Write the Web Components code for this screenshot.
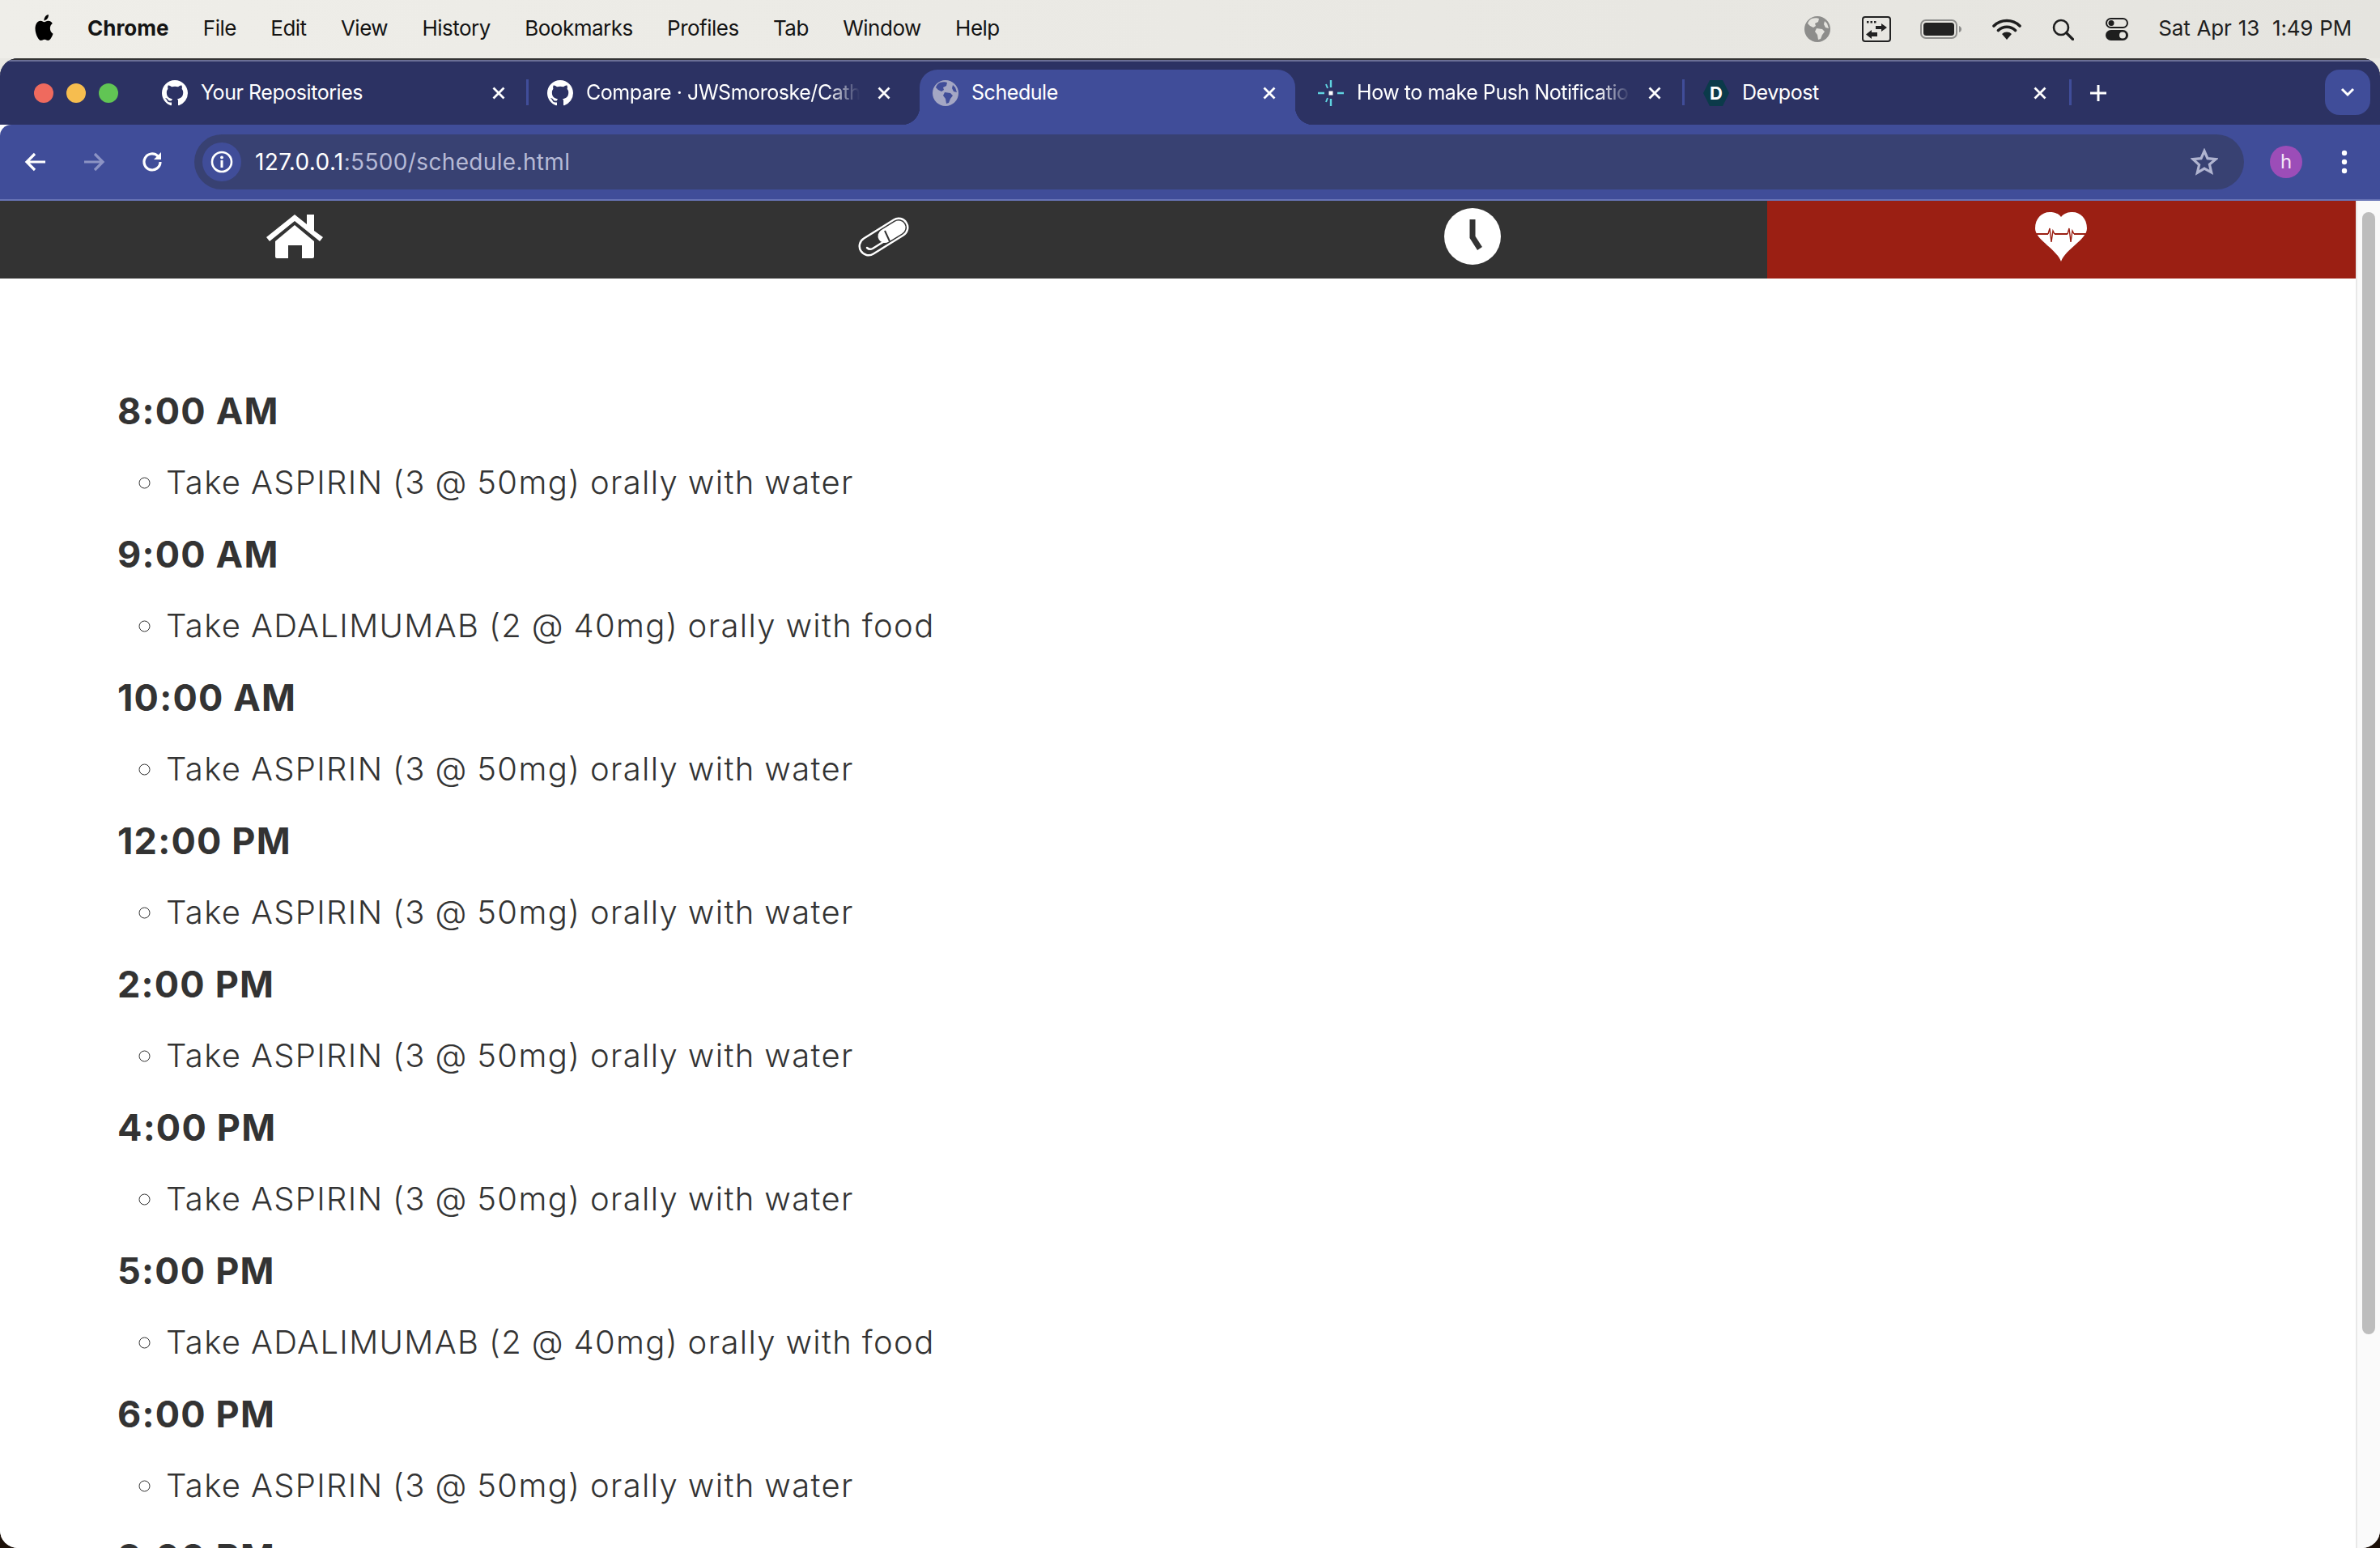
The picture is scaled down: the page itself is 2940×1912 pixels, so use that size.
<!DOCTYPE html>
<html lang="en"><head><meta charset="utf-8"><title>Schedule</title>
<style>html,body{margin:0;height:100%;overflow:hidden}body{font-family:Inter,"Liberation Sans",sans-serif}</style>
</head><body>
<desktop-shell>
  <mac-menubar></mac-menubar>
  <browser-window>
    <tab-strip slot="strip">
      <browser-tab icon="github">Your Repositories</browser-tab>
      <browser-tab icon="github" fade>Compare · JWSmoroske/Catheter</browser-tab>
      <browser-tab icon="globe" active>Schedule</browser-tab>
      <browser-tab icon="slack" fade>How to make Push Notifications</browser-tab>
      <browser-tab icon="devpost" sep>Devpost</browser-tab>
    </tab-strip>
    <browser-toolbar slot="toolbar"></browser-toolbar>
    <app-nav></app-nav>
    <schedule-list>
      <schedule-entry time="8:00 AM">Take ASPIRIN (3 @ 50mg) orally with water</schedule-entry>
      <schedule-entry time="9:00 AM">Take ADALIMUMAB (2 @ 40mg) orally with food</schedule-entry>
      <schedule-entry time="10:00 AM">Take ASPIRIN (3 @ 50mg) orally with water</schedule-entry>
      <schedule-entry time="12:00 PM">Take ASPIRIN (3 @ 50mg) orally with water</schedule-entry>
      <schedule-entry time="2:00 PM">Take ASPIRIN (3 @ 50mg) orally with water</schedule-entry>
      <schedule-entry time="4:00 PM">Take ASPIRIN (3 @ 50mg) orally with water</schedule-entry>
      <schedule-entry time="5:00 PM">Take ADALIMUMAB (2 @ 40mg) orally with food</schedule-entry>
      <schedule-entry time="6:00 PM">Take ASPIRIN (3 @ 50mg) orally with water</schedule-entry>
      <schedule-entry time="8:00 PM">Take ASPIRIN (3 @ 50mg) orally with water</schedule-entry>
    </schedule-list>
  </browser-window>
</desktop-shell>
<script>
const GH='M8 0C3.58 0 0 3.58 0 8c0 3.54 2.29 6.53 5.47 7.59.4.07.55-.17.55-.38 0-.19-.01-.82-.01-1.49-2.01.37-2.53-.49-2.69-.94-.09-.23-.48-.94-.82-1.13-.28-.15-.68-.52-.01-.53.63-.01 1.08.58 1.23.82.72 1.21 1.87.87 2.33.66.07-.52.28-.87.51-1.07-1.78-.2-3.64-.89-3.64-3.95 0-.87.31-1.59.82-2.15-.08-.2-.36-1.02.08-2.12 0 0 .67-.21 2.2.82.64-.18 1.32-.27 2-.27.68 0 1.36.09 2 .27 1.53-1.04 2.2-.82 2.2-.82.44 1.1.16 1.92.08 2.12.51.56.82 1.27.82 2.15 0 3.07-1.87 3.75-3.65 3.95.29.25.54.73.54 1.48 0 1.07-.01 1.93-.01 2.2 0 .21.15.46.55.38A8.013 8.013 0 0016 8c0-4.42-3.58-8-8-8z';
const globe=(disc,land)=>`<svg viewBox="0 0 32 32" width="32" height="32"><circle cx="16" cy="16" r="16" fill="${disc}"/><path fill="${land}" d="M9 3c3-1 7-1 9 0l-1 4-4 2 1 3-3 2-4-2-3-3c1-3 3-5 5-6zM15 15l7 1 3 3-3 4-2 5-3 1-1-6-3-4zM25 6l3 3 2 6-4-1-2-4z"/></svg>`;
const ICONS={
 github:`<svg viewBox="0 0 16 16" width="32" height="32"><path fill="#fff" d="${GH}"/></svg>`,
 globe:globe('#a4a7c4','#404d99'),
 slack:`<svg viewBox="0 0 32 32" width="32" height="32"><rect x="13.5" y="13.5" width="5" height="5" fill="#fff"/><g stroke="#5fd3e0" stroke-width="2.4"><path d="M16 0v9M16 23v9M0 16h8M24 16h8"/><path d="M10 5l2 5M10 27l2-5" stroke-width="2"/></g></svg>`,
 devpost:`<svg viewBox="0 0 32 32" width="32" height="32"><path fill="#0b3a4a" d="M8 0h16l8 16-8 16H8L0 16z"/></svg>`
};
function def(name,html,init){
  customElements.define(name,class extends HTMLElement{
    constructor(){super();this.attachShadow({mode:'open'}).innerHTML=typeof html==='function'?html(this):html;}
    connectedCallback(){init&&init(this)}
  });
}
def('desktop-shell',`<style>:host{display:flex;flex-direction:column;height:1912px;overflow:hidden;background:linear-gradient(#e9e8e3 0 120px,#1c1008 120px)}</style><slot></slot>`);

def('mac-menubar',`<style>
:host{display:flex;align-items:center;height:72px;flex:none;background:linear-gradient(90deg,#efeee9,#e5e4df);color:#141414;font:400 26px/34px Inter,"Liberation Sans",sans-serif;padding:0 35px 2px 41px;box-sizing:border-box}
.apple{width:27px;height:32px;margin-right:40px;margin-top:-2px}
nav{display:flex;gap:42.3px;letter-spacing:-.5px}
b{font-weight:700;letter-spacing:0}
.sp{flex:1}
.st{display:flex;align-items:center;color:#1e1e1e;margin-top:2px}
svg{display:block}
.date{margin-left:37px;letter-spacing:-.2px;word-spacing:1px;margin-top:-2px}
.date span{margin-left:16px}
</style>
<svg class="apple" viewBox="0 0 24 24" preserveAspectRatio="none"><path fill="#000" d="M12.152 6.896c-.948 0-2.415-1.078-3.96-1.04-2.04.027-3.91 1.183-4.961 3.014-2.117 3.675-.546 9.103 1.519 12.09 1.013 1.454 2.208 3.09 3.792 3.039 1.52-.065 2.09-.987 3.935-.987 1.831 0 2.35.987 3.96.948 1.637-.026 2.676-1.48 3.676-2.948 1.156-1.688 1.636-3.325 1.662-3.415-.039-.013-3.182-1.221-3.22-4.857-.026-3.04 2.48-4.494 2.597-4.559-1.429-2.09-3.623-2.324-4.39-2.376-2-.156-3.675 1.09-4.61 1.09zM15.53 3.83c.843-1.012 1.4-2.427 1.245-3.83-1.207.052-2.662.805-3.532 1.818-.78.896-1.454 2.338-1.273 3.714 1.338.104 2.715-.688 3.559-1.701"/></svg>
<nav><b>Chrome</b><span>File</span><span>Edit</span><span>View</span><span>History</span><span>Bookmarks</span><span>Profiles</span><span>Tab</span><span>Window</span><span>Help</span></nav>
<div class="sp"></div>
<div class="st">
 <svg width="32" height="32" viewBox="0 0 32 32" style="margin-right:39px"><circle cx="16" cy="16" r="16" fill="#8d8d8b"/><path fill="#e4e3de" d="M9 3c3-1 7-1 9 0l-1 4-4 2 1 3-3 2-4-2-3-3c1-3 3-5 5-6zM15 15l7 1 3 3-3 4-2 5-3 1-1-6-3-4zM25 6l3 3 2 6-4-1-2-4z"/></svg>
 <svg width="36" height="32" viewBox="0 0 36 32" style="margin-right:36px"><rect x="1" y="1" width="34" height="30" rx="3" fill="none" stroke="#222" stroke-width="2"/><path fill="#222" d="M6 6h2.5v2.5H6zM10.500 6h2.500v2.500h-2.500zM15 6h2.500v2.500H15z"/><path fill="#222" d="M17 12h7V9l7 5-7 5v-3h-7zM19 17v3h-7v-3l-7 5.500 7 5.500v-3h7v3z" /></svg>
 <svg width="52" height="24" viewBox="0 0 52 24" style="margin-right:37px"><rect x="1" y="1" width="44" height="22" rx="6" fill="none" stroke="#8d8d8b" stroke-width="2"/><rect x="4" y="4" width="38" height="16" rx="3.500" fill="#222"/><path d="M48 8c2 1 3 2 3 4s-1 3-3 4z" fill="#8d8d8b"/></svg>
 <svg width="36" height="26" viewBox="0 0 36 26" style="margin-right:38px"><path d="M2 9a23 23 0 0 1 32 0M7.500 14.500a15 15 0 0 1 21 0" fill="none" stroke="#1e1e1e" stroke-width="3.600" stroke-linecap="round"/><path d="M12 19a8.500 8.500 0 0 1 12 0l-6 7z" fill="#1e1e1e"/></svg>
 <svg width="27" height="27" viewBox="0 0 27 27" style="margin-right:39px"><circle cx="11" cy="11" r="9" fill="none" stroke="#1e1e1e" stroke-width="2.600"/><path d="M17.500 17.500l8 8" stroke="#1e1e1e" stroke-width="3.200" stroke-linecap="round"/></svg>
 <svg width="28" height="28" viewBox="0 0 28 28"><rect x="1" y="1" width="26" height="11" rx="5.500" fill="none" stroke="#1e1e1e" stroke-width="2"/><circle cx="7" cy="6.500" r="3.500" fill="#1e1e1e"/><rect y="15" width="28" height="13" rx="6.500" fill="#1e1e1e"/><circle cx="21" cy="21.500" r="4" fill="#e6e5e0"/></svg>
 <div class="date">Sat Apr 13<span>1:49 PM</span></div>
</div>`);

def('browser-window',`<style>
:host{display:flex;flex-direction:column;flex:1;min-height:0;border-radius:22px;overflow:hidden;background:#fff;box-shadow:inset 0 2px #333}
main{flex:1;min-height:0;display:flex}
.page{flex:1;min-width:0;overflow:hidden;background:#fff}
.track{width:30px;flex:none;box-sizing:border-box;background:#fafafa;border-left:2px solid #e8e8e8;padding:14px 6px 0 6px}
.thumb{width:16px;height:1386px;border-radius:8px;background:#bdbdbd}
</style>
<slot name="strip"></slot><slot name="toolbar"></slot>
<main><div class="page"><slot></slot></div><div class="track"><div class="thumb"></div></div></main>`);

def('tab-strip',`<style>
:host{display:flex;align-items:flex-start;flex:none;height:82px;box-sizing:border-box;background:#2c3263;border-top:2px solid #333;box-shadow:inset 0 2px #6b6f96;padding-top:12px;color:#fff}
.lights{width:176px;height:58px;flex:none;display:flex;align-items:center;gap:16px;padding-left:42px;box-sizing:border-box}
.lights i{width:24px;height:24px;border-radius:50%}
.tabs{display:flex}
.plus{width:72px;height:58px;display:flex;align-items:center;justify-content:center;position:relative}
.plus::before{content:"";position:absolute;left:0;top:12px;width:3px;height:32px;background:#404d99}
.sp{flex:1}
.more{width:56px;height:56px;border-radius:18px;background:#404d99;margin-right:12px;display:flex;align-items:center;justify-content:center}
</style>
<div class="lights"><i style="background:#ef6a5e"></i><i style="background:#f6bd4f"></i><i style="background:#61c554"></i></div>
<div class="tabs"><slot></slot></div>
<div class="plus"><svg width="22" height="22" viewBox="0 0 22 22"><path d="M11 1v20M1 11h20" stroke="#fff" stroke-width="3"/></svg></div>
<div class="sp"></div>
<div class="more"><svg width="18" height="12" viewBox="0 0 18 12"><path d="M2 2l7 7 7-7" fill="none" stroke="#fff" stroke-width="3"/></svg></div>`);

def('browser-tab',t=>{
 const ic=t.getAttribute('icon');
 const active=t.hasAttribute('active');
 const ico=ic==='devpost'?`<span class="ico">${ICONS.devpost}<em>D</em></span>`:`<span class="ico">${ICONS[ic]}</span>`;
 return `<style>
:host{display:block;width:476px;height:68px;flex:none;position:relative;color:#fff;font:400 25px/34px Inter,"Liberation Sans",sans-serif;letter-spacing:-.45px}
.tab{height:58px;display:flex;align-items:center;padding:0 24px;box-sizing:border-box;position:relative}
.ico{width:32px;height:32px;flex:none;position:relative;display:block}
.ico svg{display:block}
em{position:absolute;inset:0;text-align:center;font:700 22px/32px Inter,"Liberation Sans",sans-serif;color:#fff;letter-spacing:0}
.title{flex:1;min-width:0;margin:0 18px 2px 16px;white-space:nowrap;overflow:hidden;${t.hasAttribute('fade')?'-webkit-mask-image:linear-gradient(90deg,#000 calc(100% - 40px),transparent);mask-image:linear-gradient(90deg,#000 calc(100% - 40px),transparent);':''}}
.x{width:24px;height:24px;flex:none}
.bg{position:absolute;left:8px;right:4px;top:0;bottom:0;background:#404d99;border-radius:22px 22px 0 0}
.bg::before,.bg::after{content:"";position:absolute;bottom:0;width:22px;height:22px}
.bg::before{left:-22px;background:radial-gradient(circle at 0 0,transparent 22px,#404d99 22.500px)}
.bg::after{right:-22px;background:radial-gradient(circle at 100% 0,transparent 22px,#404d99 22.500px)}
.sep{position:absolute;right:-1px;top:12px;width:3px;height:32px;background:#404d99}
</style>
${active?'<div class="bg"></div>':''}
<div class="tab">${ico}<span class="title"><slot></slot></span>
<svg class="x" viewBox="0 0 24 24"><path d="M5.500 5.500l13 13M18.500 5.500l-13 13" stroke="#fff" stroke-width="2.800"/></svg></div>
${(ic==='github'&&!t.hasAttribute('fade'))?'<div class="sep"></div>':''}${ic==='slack'?'<div class="sep"></div>':''}`;
});

def('browser-toolbar',`<style>
:host{display:flex;align-items:center;flex:none;height:94px;box-sizing:border-box;background:#404d99;border-bottom:2px solid #6773b6;border-radius:14px 0 0 0;padding:0 8px;position:relative;color:#fff}
.b{width:72px;height:72px;flex:none;display:flex;align-items:center;justify-content:center}
.omni{flex:1;height:68px;margin:0 16px;border-radius:34px;background:#384172;display:flex;align-items:center;padding:0 32px 0 10px;box-sizing:border-box;font:400 28px/40px Inter,"Liberation Sans",sans-serif;letter-spacing:.35px}
.chip{width:48px;height:48px;border-radius:50%;background:#404d99;flex:none;display:flex;align-items:center;justify-content:center;margin-right:17px}
.url{flex:1;color:#b6bad6}
.url b{font-weight:400;color:#fff}
.av{width:40px;height:40px;border-radius:50%;background:#9c4db8;color:#f3e6f7;font:400 24px/40px Inter,"Liberation Sans",sans-serif;text-align:center}
</style>
<div class="b"><svg width="28" height="26" viewBox="0 0 28 26"><path d="M26 13H4M13 3L3 13l10 10" fill="none" stroke="#fff" stroke-width="3.200"/></svg></div>
<div class="b"><svg width="28" height="26" viewBox="0 0 28 26"><path d="M2 13h22M15 3l10 10-10 10" fill="none" stroke="#8c93c4" stroke-width="3.200"/></svg></div>
<div class="b"><svg width="28" height="28" viewBox="0 0 28 28"><path d="M24 14a10 10 0 1 1-3-7.200" fill="none" stroke="#fff" stroke-width="3.200"/><path d="M25 2v9h-9z" fill="#fff"/></svg></div>
<div class="omni"><div class="chip"><svg width="28" height="28" viewBox="0 0 28 28"><circle cx="14" cy="14" r="12" fill="none" stroke="#fff" stroke-width="2.600"/><path d="M14 12v9" stroke="#fff" stroke-width="3"/><circle cx="14" cy="8.500" r="1.900" fill="#fff"/></svg></div>
<div class="url"><b>127.0.0.1</b>:5500/schedule.html</div>
<svg width="34" height="34" viewBox="0 0 34 34"><path d="M17 3.500l4 9.200 10 .9-7.600 6.500 2.300 9.800L17 25.100 8.300 30.400l2.300-9.800L3 13.600l10-.9z" fill="none" stroke="#b0b4d0" stroke-width="3.200"/></svg></div>
<div class="b"><div class="av">h</div></div>
<div class="b"><svg width="8" height="30" viewBox="0 0 8 30"><circle cx="4" cy="4" r="3.200" fill="#fff"/><circle cx="4" cy="15" r="3.200" fill="#fff"/><circle cx="4" cy="26" r="3.200" fill="#fff"/></svg></div>`);

def('app-nav',`<style>
:host{display:grid;grid-template-columns:repeat(4,1fr);height:96px;background:#333}
a{display:flex;align-items:center;justify-content:center;padding-bottom:8px;box-sizing:border-box}
.on{background:#9b1f13}
svg{display:block}
</style>
<a><svg width="70" height="55" viewBox="0 0 70 55"><path fill="#fff" d="M35 0L50 12V0h9v20l11 8-4 5L35 8 4 33l-4-5z"/><path fill="#fff" fill-rule="evenodd" d="M35 13l24 20v19q0 2-2 2H44V38H27v16H13q-2 0-2-2V33z"/></svg></a>
<a><svg width="63" height="49" viewBox="0 0 63 49"><path d="M13 36L50 13" stroke="#fff" stroke-width="25" stroke-linecap="round"/><path d="M13 36L50 13" stroke="#333" stroke-width="20" stroke-linecap="round"/><path d="M33 23.500L50 13" stroke="#fff" stroke-width="17" stroke-linecap="round"/><path d="M33 17l6 13" stroke="#333" stroke-width="2" /><path d="M11 38q3 3 7 1L34 29" fill="none" stroke="#fff" stroke-width="2.500" stroke-linecap="round"/></svg></a>
<a><svg width="70" height="70" viewBox="0 0 70 70"><circle cx="35" cy="35" r="35" fill="#fff"/><path d="M35 14v22l9 14" fill="none" stroke="#333" stroke-width="7"/></svg></a>
<a class="on"><svg width="64" height="61" viewBox="0 0 64 61"><path fill="#fff" d="M32 6C28 1 23 0 18 0 8 0 0 8 0 20 0 34 26 45 32 61 38 45 64 34 64 20 64 8 56 0 46 0c-5 0-10 1-14 6z"/><path d="M0 27h16M24 27h16M48 27h16" fill="none" stroke="#9b1f13" stroke-width="2.200"/><path d="M16 27l2-7 2 17 2-14 2 4M40 27l2-7 2 17 2-14 2 4" fill="none" stroke="#9b1f13" stroke-width="1.400"/></svg></a>`);

def('schedule-list',`<style>:host{display:block;padding:119px 0 0 145px;color:#333;font-family:Inter,"Liberation Sans",sans-serif}</style><slot></slot>`);

def('schedule-entry',t=>`<style>
:host{display:block;height:177px}
h3{margin:0;font:700 45px/89px Inter,"Liberation Sans",sans-serif;letter-spacing:1.2px;color:#333}
ul{margin:0;padding:0 0 0 60px;list-style:circle;font:300 40px/88px Inter,"Liberation Sans",sans-serif;letter-spacing:1.35px;word-spacing:-1px;color:#333;white-space:nowrap}
</style><h3>${t.getAttribute('time')}</h3><ul><li><slot></slot></li></ul>`);
</script>
</body></html>
